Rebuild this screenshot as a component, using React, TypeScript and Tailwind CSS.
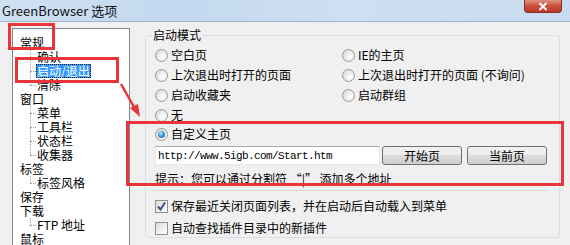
import React from "react";

const FONT = { fontFamily: '"Noto Sans CJK SC", "Liberation Sans", sans-serif' };

function Radio({ checked = false }: { checked?: boolean }) {
  return (
    <span className="w-[13px] h-[13px] rounded-full border border-[#9a9a9a] bg-[radial-gradient(circle_at_65%_65%,#ffffff_0%,#ececec_45%,#cfcfcf_100%)] flex items-center justify-center shrink-0">
      {checked && (
        <span className="w-[7px] h-[7px] rounded-full bg-[radial-gradient(circle_at_40%_35%,#b8ecff_0%,#3b9be0_45%,#0d4a8c_100%)]" />
      )}
    </span>
  );
}

function Check({ checked = false }: { checked?: boolean }) {
  return (
    <span className="w-[13px] h-[13px] border border-[#8f8f8f] bg-[linear-gradient(135deg,#dcdcdc,#ffffff)] flex items-center justify-center shrink-0">
      {checked && (
        <svg width="11" height="11" viewBox="0 0 11 11">
          <path d="M2 5.5 L4.5 8.5 L9 1.5" fill="none" stroke="#3a4f8c" strokeWidth="2" />
        </svg>
      )}
    </span>
  );
}

function RadioRow({ label, checked }: { label: string; checked?: boolean }) {
  return (
    <div className="flex items-center h-[20px] gap-[3px]">
      <Radio checked={checked} />
      <span className="text-[12px] leading-[14px] text-black whitespace-nowrap">{label}</span>
    </div>
  );
}

function Btn({ label }: { label: string }) {
  return (
    <div className="w-[80px] h-[19px] rounded-[3px] border border-[#707070] bg-[linear-gradient(to_bottom,#f2f2f2_0%,#ebebeb_50%,#dddddd_50%,#cfcfcf_100%)] flex items-center justify-center text-[12px] leading-[14px] text-black">
      {label}
    </div>
  );
}

type Node = { label: string; children?: string[] };
const tree: Node[] = [
  { label: "常规", children: ["确认", "启动/退出", "清除"] },
  { label: "窗口", children: ["菜单", "工具栏", "状态栏", "收集器"] },
  { label: "标签", children: ["标签风格"] },
  { label: "保存" },
  { label: "下载", children: ["FTP 地址"] },
  { label: "鼠标" },
];

function Tree() {
  return (
    <div className="w-[118px] h-[240px] mt-[6px] ml-[12px] border border-[#828790] bg-white pt-[7px] text-[12px] leading-[14px] text-black">
      {tree.map((n) => (
        <div key={n.label}>
          <div className="h-[14px] pl-[7px] flex items-center whitespace-nowrap">{n.label}</div>
          {n.children && (
            <div className="relative">
              <span className="absolute left-[17px] top-0 bottom-[7px] border-l border-dotted border-[#a0a0a0]" />
              {n.children.map((c) => (
                <div key={c} className="h-[14px] flex items-center whitespace-nowrap">
                  <span className="ml-[17px] w-[6px] border-t border-dotted border-[#a0a0a0]" />
                  {c === "启动/退出" ? (
                    <span className="ml-[0px] px-[1px] h-[14px] flex items-center bg-[#3399ff] text-white outline outline-1 outline-dotted outline-[#1a1a1a] -outline-offset-1">
                      {c}
                    </span>
                  ) : (
                    <span className="ml-[1px]">{c}</span>
                  )}
                </div>
              ))}
            </div>
          )}
        </div>
      ))}
    </div>
  );
}

export default function App() {
  return (
    <div className="relative w-[570px] h-[245px] overflow-hidden bg-[#f0f0f0]" style={FONT}>
      {/* title bar */}
      <div className="h-[22px] flex items-start bg-[linear-gradient(to_right,#cfe0f2_0%,#c3d8ef_30%,#cddff2_60%,#c8dcf1_100%)] border-b border-[#9fb3c9]">
        <span className="ml-[2px] mt-[3px] text-[13px] leading-[16px] text-[#111]">GreenBrowser 选项</span>
        <div className="ml-auto mr-[8px] w-[38px] h-[13px] rounded-b-[4px] border border-t-0 border-[#8a2a20] bg-[linear-gradient(to_bottom,#e2917f_0%,#c9503c_50%,#b8382a_100%)] flex items-center justify-center">
          <svg width="10" height="9" viewBox="0 0 10 9">
            <path d="M1.5 1 L8.5 8 M8.5 1 L1.5 8" stroke="#ffffff" strokeWidth="2" />
          </svg>
        </div>
      </div>

      {/* body */}
      <div className="flex items-start">
        <Tree />
        <div className="ml-[15px] mt-[13px] w-[415px] h-[203px] border border-[#d5dfe5] rounded-[3px] pl-[9px] flex flex-col">
          <span className="-mt-[8px] ml-[-3px] px-[1px] w-fit bg-[#f0f0f0] text-[12px] leading-[14px] text-black">启动模式</span>
          <div className="mt-[3px] grid grid-cols-[187px_1fr]">
            <RadioRow label="空白页" />
            <RadioRow label="IE的主页" />
            <RadioRow label="上次退出时打开的页面" />
            <RadioRow label="上次退出时打开的页面 (不询问)" />
            <RadioRow label="启动收藏夹" />
            <RadioRow label="启动群组" />
            <RadioRow label="无" />
          </div>
          <div className="flex items-center h-[18px] gap-[3px]">
            <Radio checked />
            <span className="text-[12px] leading-[14px] text-black">自定义主页</span>
          </div>
          <div className="mt-[3px] flex items-center">
            <div className="w-[225px] h-[19px] bg-white border border-[#e3e9ef] border-t-[#abadb3] flex items-center pl-[2px]">
              <span
                className="text-[11px] tracking-[-0.6px] text-black leading-[12px]"
                style={{ fontFamily: '"Liberation Mono", monospace' }}
              >
                http://www.5igb.com/Start.htm
              </span>
            </div>
            <div className="ml-[2px] flex gap-[5px]">
              <Btn label="开始页" />
              <Btn label="当前页" />
            </div>
          </div>
          <div className="mt-[7px] h-[14px] text-[12px] leading-[14px] text-black whitespace-nowrap">
            提示：您可以通过分割符 “|” 添加多个地址
          </div>
          <div className="mt-[4px] ml-[-2px] w-[394px] border-t border-[#d5d5d5]" />
          <div className="mt-[6px] flex items-center h-[18px] gap-[3px]">
            <Check checked />
            <span className="text-[12px] leading-[14px] text-black whitespace-nowrap">保存最近关闭页面列表，并在启动后自动载入到菜单</span>
          </div>
          <div className="mt-[4px] flex items-center h-[18px] gap-[3px]">
            <Check />
            <span className="text-[12px] leading-[14px] text-black whitespace-nowrap">自动查找插件目录中的新插件</span>
          </div>
        </div>
      </div>

      {/* red annotations */}
      <div className="absolute left-[8px] top-[23px] w-[47px] h-[27px] border-[3px] border-[#e8353b]" />
      <div className="absolute left-[15px] top-[57px] w-[104px] h-[26px] border-[3px] border-[#e8353b]" />
      <div className="absolute left-[126px] top-[121px] w-[438px] h-[65px] border-[3px] border-[#e8353b]" />
      <svg className="absolute left-0 top-0" width="570" height="245" viewBox="0 0 570 245">
        <line x1="121" y1="84" x2="134" y2="107" stroke="#e8353b" strokeWidth="2.5" />
        <polygon points="140,117 130,108 138,104" fill="#e8353b" />
      </svg>
    </div>
  );
}
